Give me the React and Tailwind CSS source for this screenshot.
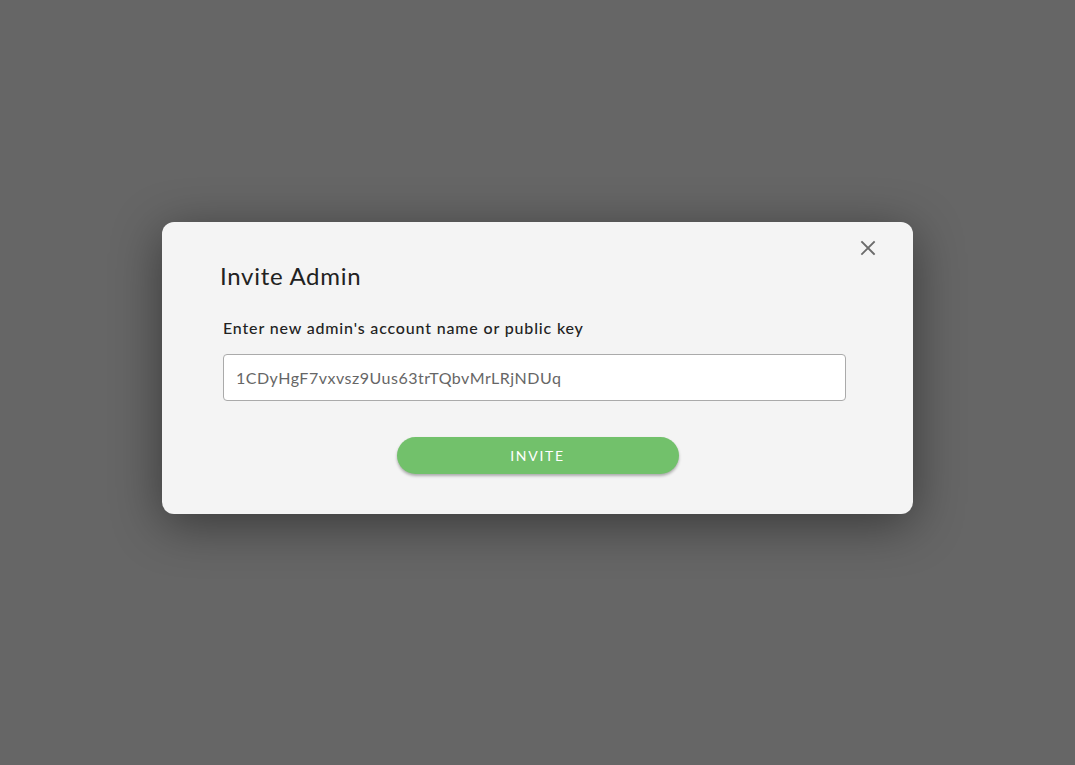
import React from 'react';

export default function App() {
  return (
    <div
      className="w-full h-[765px] bg-[#666666] pt-[222px]"
      style={{ fontFamily: 'Lato, "Open Sans", sans-serif' }}
    >
      <div className="relative mx-auto w-[751px] bg-[#f4f4f4] rounded-[12px] shadow-[0_10px_50px_rgba(0,0,0,0.45)] pt-[38px] pb-[40px]">
        {/* close */}
        <button className="absolute top-[16px] right-[35px] w-[20px] h-[20px] flex items-center justify-center text-[#6b6b6b]">
          <svg width="16" height="16" viewBox="0 0 16 16" fill="none" stroke="currentColor" strokeWidth="1.8" strokeLinecap="square">
            <path d="M2 2L14 14M14 2L2 14" />
          </svg>
        </button>

        <h2 className="ml-[58px] text-[24px] leading-[32px] tracking-[0.03em] text-[#222222] font-normal">Invite Admin</h2>

        <div className="ml-[61px] w-[623px]">
          <label className="block mt-[24px] text-[16px] leading-[24px] tracking-[0.052em] font-medium text-[#222222]">
            Enter new admin's account name or public key
          </label>
          <input
            readOnly
            value="1CDyHgF7vxvsz9Uus63trTQbvMrLRjNDUq"
            className="block mt-[14px] w-full h-[47px] px-[12px] bg-white border border-[#aaaaaa] rounded-[4px] text-[16px] tracking-[0.032em] text-[#666666] outline-none"
          />
        </div>

        <div className="flex justify-center mt-[36px]">
          <button className="w-[282px] h-[37px] rounded-full bg-[#72c16b] text-white text-[14px] tracking-[0.12em] shadow-[0_2px_3px_rgba(0,0,0,0.3)]">
            INVITE
          </button>
        </div>
      </div>
    </div>
  );
}
